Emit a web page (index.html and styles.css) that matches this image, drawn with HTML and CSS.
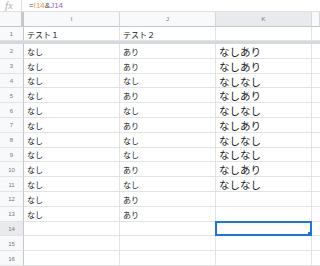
FILE: index.html
```html
<!DOCTYPE html>
<html lang="ja">
<head>
    <meta charset="UTF-8">
    <title>シート</title>
    <link rel="stylesheet" href="styles.css">
</head>
<body>
    <div class="formula-bar">
        <span class="fx">fx</span>
        <span class="formula">=<span class="ref-a">I14</span>&amp;<span class="ref-b">J14</span></span>
    </div>

    <div class="sheet">
        <div class="corner"></div>
        <div class="col-head">I</div>
        <div class="col-head">J</div>
        <div class="col-head active">K</div>
        <div class="col-head last"></div>

        <div class="row-head">1</div>
        <div class="cell">テスト１</div>
        <div class="cell">テスト２</div>
        <div class="cell big"></div>
        <div class="cell last"></div>

        <div class="freeze"></div>

        <div class="row-head">2</div><div class="cell">なし</div><div class="cell">あり</div><div class="cell big">なしあり</div><div class="cell last"></div>
        <div class="row-head">3</div><div class="cell">なし</div><div class="cell">あり</div><div class="cell big">なしあり</div><div class="cell last"></div>
        <div class="row-head">4</div><div class="cell">なし</div><div class="cell">なし</div><div class="cell big">なしなし</div><div class="cell last"></div>
        <div class="row-head">5</div><div class="cell">なし</div><div class="cell">あり</div><div class="cell big">なしあり</div><div class="cell last"></div>
        <div class="row-head">6</div><div class="cell">なし</div><div class="cell">なし</div><div class="cell big">なしなし</div><div class="cell last"></div>
        <div class="row-head">7</div><div class="cell">なし</div><div class="cell">あり</div><div class="cell big">なしあり</div><div class="cell last"></div>
        <div class="row-head">8</div><div class="cell">なし</div><div class="cell">なし</div><div class="cell big">なしなし</div><div class="cell last"></div>
        <div class="row-head">9</div><div class="cell">なし</div><div class="cell">なし</div><div class="cell big">なしなし</div><div class="cell last"></div>
        <div class="row-head">10</div><div class="cell">なし</div><div class="cell">あり</div><div class="cell big">なしあり</div><div class="cell last"></div>
        <div class="row-head">11</div><div class="cell">なし</div><div class="cell">なし</div><div class="cell big">なしなし</div><div class="cell last"></div>
        <div class="row-head">12</div><div class="cell">なし</div><div class="cell">あり</div><div class="cell big"></div><div class="cell last"></div>
        <div class="row-head">13</div><div class="cell">なし</div><div class="cell">あり</div><div class="cell big"></div><div class="cell last"></div>
        <div class="row-head active">14</div><div class="cell"></div><div class="cell"></div><div class="cell big selected"><span class="handle"></span></div><div class="cell last"></div>
        <div class="row-head">15</div><div class="cell"></div><div class="cell"></div><div class="cell big"></div><div class="cell last"></div>
        <div class="row-head">16</div><div class="cell"></div><div class="cell"></div><div class="cell big"></div><div class="cell last"></div>
    </div>
</body>
</html>
```

FILE: styles.css
```css
body {
    margin: 0;
    width: 320px;
    height: 266px;
    overflow: hidden;
    background-color: #fff;
    font-family: "Liberation Sans", "Noto Sans CJK JP", sans-serif;
    color: #222;
}
.formula-bar {
    display: flex;
    align-items: center;
    height: 12px;
    border-bottom: 1px solid #e0e0e0;
    box-sizing: border-box;
}
.fx {
    width: 22px;
    box-sizing: border-box;
    padding-left: 5px;
    border-right: 1px solid #dadce0;
    font-family: "Liberation Serif", serif;
    font-style: italic;
    font-size: 11px;
    line-height: 11px;
    color: #b0b0b0;
}
.formula {
    padding-left: 7px;
    font-size: 8px;
    line-height: 11px;
    color: #444;
}
.ref-a {
    color: #e8a030;
}
.ref-b {
    color: #9b5fc0;
}
.sheet {
    display: grid;
    grid-template-columns: 24px 96px 96px 96px 1fr;
    grid-template-rows: 15px 14px 3px;
    grid-auto-rows: 14.8px;
}
.sheet > div {
    box-sizing: border-box;
    border-right: 1px solid #e2e3e3;
    border-bottom: 1px solid #e2e3e3;
    display: flex;
    align-items: center;
    overflow: hidden;
    white-space: nowrap;
}
.corner {
    background-color: #f8f9fa;
    border-right: 3px solid #c4c7cb !important;
    border-bottom: 1px solid #c4c7cb !important;
}
.col-head {
    justify-content: center;
    background-color: #f8f9fa;
    font-size: 6px;
    color: #777;
    border-bottom: 1px solid #c4c7cb !important;
    border-right: 1px solid #d6d8db !important;
}
.col-head.active {
    background-color: #e8eaed;
}
.row-head {
    justify-content: center;
    background-color: #f8f9fa;
    font-size: 6px;
    color: #777;
    border-right: 1px solid #c4c7cb !important;
    border-bottom: 1px solid #e2e3e3;
    padding-top: 1px;
}
.row-head.active {
    background-color: #e8eaed;
}
.cell {
    padding: 1px 0 0 3px;
    font-size: 8px;
}
.cell.big {
    font-size: 10.5px;
}
.cell.last {
    border-right: none !important;
}
.freeze {
    grid-column: 1 / -1;
    background-color: #d3d8df;
    border: none !important;
}
.cell.selected {
    position: relative;
    border: 2px solid #1a73e8 !important;
    margin: -1px 0 0 -1px;
}
.handle {
    position: absolute;
    right: -4px;
    bottom: -4px;
    width: 5px;
    height: 5px;
    background-color: #1a73e8;
    border: 1px solid #fff;
}
```
